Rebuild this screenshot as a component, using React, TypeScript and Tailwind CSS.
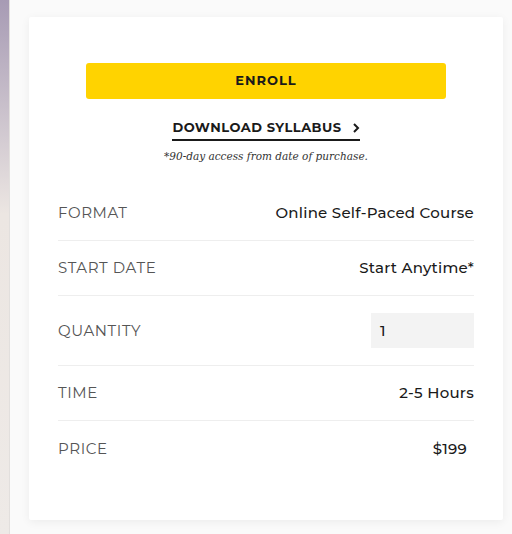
import React from "react";

const rows: { label: string; value: string }[] = [
  { label: "FORMAT", value: "Online Self-Paced Course" },
  { label: "START DATE", value: "Start Anytime*" },
];

export default function App() {
  const sans = { fontFamily: '"Montserrat", "Noto Sans", "Open Sans", sans-serif' };
  return (
    <div className="flex h-[534px] w-[512px] overflow-hidden bg-[#fafafa]" style={sans}>
      <div className="h-full w-[10px] shrink-0 border-r border-[#e2dfdd] bg-gradient-to-b from-[#a79bb4] via-[#ece6e2] via-40% to-[#eeeae7]" />
      <div className="flex-1 pl-[19px] pr-[9px] pt-[17px]">
        <div className="flex h-[503px] flex-col rounded-[2px] bg-white px-[29px] pt-[46px] shadow-[0_2px_10px_rgba(0,0,0,0.06)]">
          <div className="flex flex-col items-center">
            <button className="flex h-[36px] w-[360px] items-center justify-center rounded-[3px] bg-[#ffd300] text-[13px] font-bold tracking-[1px] text-[#1a1a1a]">
              ENROLL
            </button>
            <div className="mt-[19px] flex items-center gap-[10px] border-b-2 border-[#1a1a1a] pb-[1px] text-[13px] font-bold tracking-[0.5px] text-[#1a1a1a]">
              <span>DOWNLOAD SYLLABUS</span>
              <svg width="8" height="10" viewBox="0 0 8 10" fill="none">
                <path d="M2 1l4 4-4 4" stroke="#1a1a1a" strokeWidth="2" />
              </svg>
            </div>
            <p
              className="mt-[8px] text-[10.5px] italic text-[#333]"
              style={{ fontFamily: '"DejaVu Serif", "Liberation Serif", serif' }}
            >
              *90-day access from date of purchase.
            </p>
          </div>
          <div className="mt-[22px] flex flex-col">
            {rows.map((r) => (
              <div
                key={r.label}
                className="flex h-[55px] items-center justify-between border-b border-[#eeeeee]"
              >
                <span className="text-[15px] tracking-[0.6px] text-[#555555]">{r.label}</span>
                <span className="text-[15px] font-medium tracking-[0.25px] text-[#1a1a1a]">{r.value}</span>
              </div>
            ))}
            <div className="flex h-[70px] items-center justify-between border-b border-[#eeeeee]">
              <span className="text-[15px] tracking-[0.6px] text-[#555555]">QUANTITY</span>
              <div className="flex h-[35px] w-[103px] items-center bg-[#f3f3f3] pl-[9px] text-[15px] font-medium text-[#1a1a1a]">
                1
              </div>
            </div>
            <div className="flex h-[55px] items-center justify-between border-b border-[#eeeeee]">
              <span className="text-[15px] tracking-[0.6px] text-[#555555]">TIME</span>
              <span className="text-[15px] font-medium tracking-[0.25px] text-[#1a1a1a]">2-5 Hours</span>
            </div>
            <div className="flex h-[55px] items-center justify-between">
              <span className="text-[15px] tracking-[0.6px] text-[#555555]">PRICE</span>
              <span className="pr-[7px] text-[15px] font-medium tracking-[0.25px] text-[#1a1a1a]">$199</span>
            </div>
          </div>
        </div>
      </div>
    </div>
  );
}
